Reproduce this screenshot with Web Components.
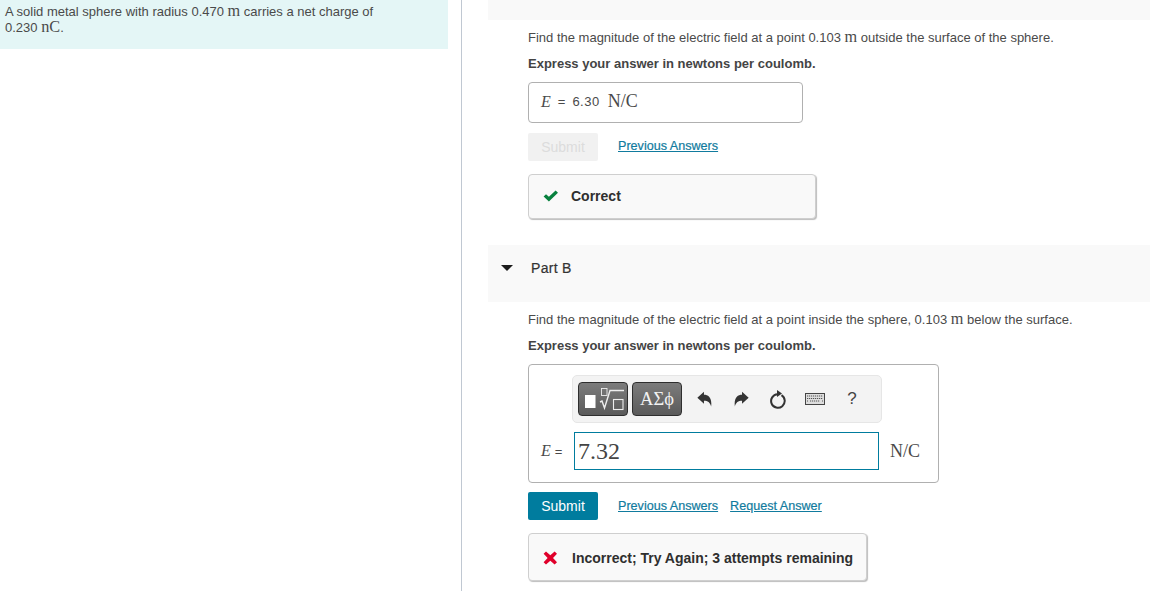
<!DOCTYPE html>
<html>
<head>
<meta charset="utf-8">
<title>Part B</title>
<style>
    html, body {
        margin: 0;
        height: 591px;
        overflow: hidden;
        background: #fff;
        font-family: "Liberation Sans", Arial, sans-serif;
        color: #3b3b3b;
    }
</style>
</head>
<body>
<mp-page>
    <mp-intro slot="left">A solid metal sphere with radius 0.470 <mp-m>m</mp-m> carries a net charge of<br>0.230 <mp-m>nC</mp-m>.</mp-intro>

    <mp-part-head slot="right" style="height:20px"></mp-part-head>
    <mp-part-body slot="right" style="padding-top:9px">
        <mp-text>Find the magnitude of the electric field at a point 0.103 <mp-m>m</mp-m> outside the surface of the sphere.</mp-text>
        <mp-text bold>Express your answer in newtons per coulomb.</mp-text>
        <mp-answered></mp-answered>
        <mp-actions disabled></mp-actions>
        <mp-feedback kind="correct" style="width:288px">Correct</mp-feedback>
    </mp-part-body>

    <mp-part-head slot="right" label="Part B" style="height:57px;margin-top:26px"></mp-part-head>
    <mp-part-body slot="right" style="padding-top:9px">
        <mp-text>Find the magnitude of the electric field at a point inside the sphere, 0.103 <mp-m>m</mp-m> below the surface.</mp-text>
        <mp-text bold>Express your answer in newtons per coulomb.</mp-text>
        <mp-answer-box value="7.32" unit="N/C"></mp-answer-box>
        <mp-actions request></mp-actions>
        <mp-feedback kind="incorrect" style="width:339px">Incorrect; Try Again; 3 attempts remaining</mp-feedback>
    </mp-part-body>
</mp-page>

<script>
class MpPage extends HTMLElement {
    constructor() {
        super()
        this.attachShadow({mode: 'open'}).innerHTML = `
        <style>
            :host {
                display: grid;
                grid-template-columns: 462px 1fr;
                height: 591px;
            }
            #left {
                border-right: 1px solid #c0c8d2;
                padding-right: 13px;
            }
            #right {
                padding-left: 26px;
            }
        </style>
        <div id="left"><slot name="left"></slot></div>
        <div id="right"><slot name="right"></slot></div>
        `
    }
}
customElements.define('mp-page', MpPage)

// inline, so no whitespace around the slot or it shows up as a space
class MpM extends HTMLElement {
    constructor() {
        super()
        this.attachShadow({mode: 'open'}).innerHTML = `<style>
            :host {
                font-family: "Liberation Serif", serif;
                font-size: 1.25em;
                line-height: 1;
            }
        </style><slot></slot>`
    }
}
customElements.define('mp-m', MpM)

class MpIntro extends HTMLElement {
    constructor() {
        super()
        this.attachShadow({mode: 'open'}).innerHTML = `
        <style>
            :host {
                display: block;
                height: 49px;
                box-sizing: border-box;
                padding: 3px 5px 0;
                background: #e4f6f6;
                font-size: 13px;
                line-height: 15px;
                color: #4a4a4a;
            }
        </style>
        <slot></slot>
        `
    }
}
customElements.define('mp-intro', MpIntro)

class MpPartHead extends HTMLElement {
    constructor() {
        super()
        const label = this.getAttribute('label')
        this.attachShadow({mode: 'open'}).innerHTML = `
        <style>
            :host {
                display: block;
                background: #f9f9f9;
                box-sizing: border-box;
            }
            #row {
                display: flex;
                align-items: center;
                padding: 15px 0 0 13px;
                gap: 18px;
                font-size: 14px;
                line-height: 16px;
                letter-spacing: 0.3px;
                -webkit-text-stroke: 0.2px #333;
                color: #333;
            }
            i {
                width: 0;
                height: 0;
                border: 6px solid transparent;
                border-top: 6px solid #1c1c1c;
                border-bottom: 0;
            }
        </style>
        ${label ? `<div id="row"><i></i><span>${label}</span></div>` : ''}
        `
    }
}
customElements.define('mp-part-head', MpPartHead)

class MpPartBody extends HTMLElement {
    constructor() {
        super()
        this.attachShadow({mode: 'open'}).innerHTML = `
        <style>
            :host {
                display: block;
                padding-left: 40px;
            }
        </style>
        <slot></slot>
        `
    }
}
customElements.define('mp-part-body', MpPartBody)

class MpText extends HTMLElement {
    constructor() {
        super()
        this.attachShadow({mode: 'open'}).innerHTML = `
        <style>
            :host {
                display: block;
                font-size: 13px;
                line-height: 16px;
                margin-bottom: 10px;
                white-space: nowrap;
                color: #4a4a4a;
            }
            :host([bold]) {
                font-weight: bold;
                color: #444;
            }
        </style>
        <slot></slot>
        `
    }
}
customElements.define('mp-text', MpText)

class MpAnswered extends HTMLElement {
    constructor() {
        super()
        this.attachShadow({mode: 'open'}).innerHTML = `
        <style>
            :host {
                display: flex;
                align-items: center;
                box-sizing: border-box;
                width: 275px;
                height: 41px;
                margin-top: 10px;
                padding: 0 0 2px 12px;
                border: 1px solid #b0b0b0;
                border-radius: 4px;
                font-size: 13px;
                color: #4a4a4a;
            }
            em { font: italic 16px "Liberation Serif", serif; margin-right: 7px; }
            span { font-size: 13px; margin-left: 7px; letter-spacing: .5px; }
            b { font: normal 18px "Liberation Serif", serif; margin-left: 8px; }
        </style>
        <em>E</em>=<span>6.30</span><b>N/C</b>
        `
    }
}
customElements.define('mp-answered', MpAnswered)

class MpActions extends HTMLElement {
    constructor() {
        super()
        const disabled = this.hasAttribute('disabled')
        const request = this.hasAttribute('request')
        this.attachShadow({mode: 'open'}).innerHTML = `
        <style>
            :host {
                display: flex;
                align-items: center;
                margin-top: 10px;
                font-size: 12.6px;
                -webkit-text-stroke: 0.2px #117b9e;
            }
            button {
                width: 70px;
                height: 28px;
                margin-right: 20px;
                border: 0;
                border-radius: 2px;
                padding: 0;
                background: #007c9e;
                color: #fff;
                font: 14px "Liberation Sans", sans-serif;
                -webkit-text-stroke: 0;
            }
            button[disabled] {
                background: #f1f1f1;
                color: #dcdcdc;
            }
            a {
                color: #117b9e;
                text-decoration: underline;
                margin-right: 12px;
            }
            :host([disabled]) a {
                position: relative;
                top: -1px;
            }
        </style>
        <button ${disabled ? 'disabled' : ''}>Submit</button>
        <a href="#">Previous Answers</a>
        ${request ? '<a href="#">Request Answer</a>' : ''}
        `
    }
}
customElements.define('mp-actions', MpActions)

class MpFeedback extends HTMLElement {
    constructor() {
        super()
        const correct = this.getAttribute('kind') === 'correct'
        const icon = correct
            ? '<svg width="16" height="12" viewBox="0 0 16 12"><path d="M.6 6.5 L3 4.2 L5.9 6.8 L12.6 .4 L15 2.8 L5.9 11.6 Z" fill="#08813e"/></svg>'
            : '<svg width="15" height="14" viewBox="0 0 15 14"><path d="M.6 2.8 L3 .4 L7.3 4.2 L11.6 .4 L14 2.8 L10 7 L14 11.2 L11.6 13.6 L7.3 9.8 L3 13.6 L.6 11.2 L4.6 7 Z" fill="#e0002b"/></svg>'
        this.attachShadow({mode: 'open'}).innerHTML = `
        <style>
            :host {
                display: flex;
                align-items: center;
                gap: ${correct ? 12 : 14}px;
                box-sizing: border-box;
                height: ${correct ? 45 : 48}px;
                margin-top: 13px;
                padding: ${correct ? '0 0 2px 14px' : '2px 0 0 14px'};
                border: 1px solid #cfcfcf;
                border-radius: 4px;
                background: #f9f9f9;
                box-shadow: 1px 1px 1px #bdbdbd;
                font-size: 14px;
                font-weight: bold;
                color: #2f2f2f;
            }
        </style>
        ${icon}<span><slot></slot></span>
        `
    }
}
customElements.define('mp-feedback', MpFeedback)

class MpToolbar extends HTMLElement {
    constructor() {
        super()
        this.attachShadow({mode: 'open'}).innerHTML = `
        <style>
            :host {
                display: flex;
                align-items: center;
                box-sizing: border-box;
                width: 310px;
                height: 48px;
                padding-left: 5px;
                border: 1px solid #e6e6e6;
                border-radius: 5px;
                background: #f3f3f3;
            }
            .tool {
                display: flex;
                align-items: center;
                justify-content: center;
                box-sizing: border-box;
                width: 50px;
                height: 34px;
                margin-right: 4px;
                border: 1px solid #2e2e2e;
                border-radius: 4px;
                background: linear-gradient(#7c7c7c, #5a5a5a);
                color: #f2f2f2;
                font: 18.5px "Liberation Serif", serif;
            }
            .icon {
                display: flex;
                align-items: center;
                justify-content: center;
                width: 37px;
                color: #444;
            }
            .help { font: 17px "Liberation Sans", sans-serif; color: #444; }
        </style>
        <div class="tool">
            <svg width="48" height="32" viewBox="0 0 48 32" fill="none" stroke="#eee">
                <rect x="6" y="12" width="10.5" height="13" fill="#fff" stroke="none"/>
                <rect x="34.5" y="16.5" width="9.5" height="10" stroke-width="1.1"/>
                <rect x="22.5" y="5.5" width="5.5" height="7" stroke-width=".9"/>
                <path d="M21 19 L23 18 L25.5 25 L31 7.5 H45" stroke-width="1.4"/>
            </svg>
        </div>
        <div class="tool" style="margin-right:3.5px">ΑΣϕ</div>
        <div class="icon">
            <svg width="15" height="16" viewBox="0 0 14 15"><path d="M.3 6.3 L6.5 .6 V3.6 C10.8 3.6 14.3 6.5 13.2 14.6 C12.4 10.8 10 9.2 6.5 9.2 V12 Z" fill="#333"/></svg>
        </div>
        <div class="icon">
            <svg width="15" height="16" viewBox="0 0 14 15"><path d="M13.7 6.3 L7.5 .6 V3.6 C3.2 3.6 -.3 6.5 .8 14.6 C1.6 10.8 4 9.2 7.5 9.2 V12 Z" fill="#333"/></svg>
        </div>
        <div class="icon">
            <svg width="18" height="19" viewBox="0 0 18 19"><path d="M12.5 5.2 A6.8 6.8 0 1 1 8.5 4.2" fill="none" stroke="#333" stroke-width="2"/><path d="M8 0 L13 3.4 L8 7 Z" fill="#333"/></svg>
        </div>
        <div class="icon">
            <svg width="20" height="12" viewBox="0 0 20 12"><rect x=".5" y=".5" width="19" height="11" fill="#ddd" stroke="#444"/><path d="M2 3 H18 M2 5.5 H18 M2 8 H3 M5 8 H15 M17 8 H18" stroke="#555" stroke-width="1.2" stroke-dasharray="1.2 .8"/></svg>
        </div>
        <div class="icon help">?</div>
        `
    }
}
customElements.define('mp-toolbar', MpToolbar)

class MpAnswerBox extends HTMLElement {
    constructor() {
        super()
        this.attachShadow({mode: 'open'}).innerHTML = `
        <style>
            :host {
                display: flex;
                flex-direction: column;
                box-sizing: border-box;
                width: 411px;
                height: 119px;
                margin-top: 10px;
                padding: 10px 0 0 12px;
                border: 1px solid #b0b0b0;
                border-radius: 4px;
                margin-bottom: -1px;
            }
            mp-toolbar { margin-left: 31px; }
            #row {
                display: flex;
                align-items: center;
                margin-top: 9px;
                font-size: 13px;
                color: #4a4a4a;
            }
            #label { display: flex; align-items: center; gap: 4px; width: 33px; }
            em { font: italic 16px "Liberation Serif", serif; }
            #field {
                box-sizing: border-box;
                width: 305px;
                height: 38px;
                margin-right: 11px;
                padding-left: 3px;
                border: 1px solid #007c9e;
                color: #444;
                font: 24px/36px "Liberation Serif", serif;
            }
            #unit { font: 18px "Liberation Serif", serif; }
        </style>
        <mp-toolbar></mp-toolbar>
        <div id="row">
            <div id="label"><em>E</em><span>=</span></div>
            <div id="field">${this.getAttribute('value')}</div>
            <span id="unit">${this.getAttribute('unit')}</span>
        </div>
        `
    }
}
customElements.define('mp-answer-box', MpAnswerBox)
</script>
</body>
</html>
